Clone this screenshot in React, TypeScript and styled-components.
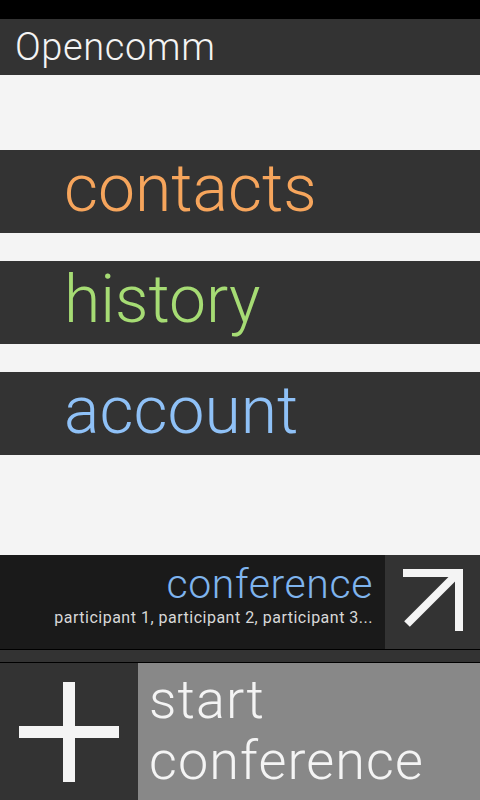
import React from "react";
import styled, { createGlobalStyle } from "styled-components";

const Global = createGlobalStyle`
  html, body { margin: 0; padding: 0; background: #f4f4f4; }
  body { font-family: Roboto, "Liberation Sans", sans-serif; font-weight: 300; }
  * { box-sizing: border-box; }
`;

const Screen = styled.div`
  width: 480px;
  height: 800px;
  display: flex;
  flex-direction: column;
  overflow: hidden;
  background: #f4f4f4;
`;

const StatusBar = styled.div`
  height: 19px;
  background: #000;
  flex: none;
`;

const Header = styled.div`
  height: 56px;
  flex: none;
  background: #333;
  display: flex;
  align-items: center;
  padding-left: 15px;
  color: #f4f4f4;
  font-size: 38px;
  font-weight: 300;
  letter-spacing: 0.6px;
`;

const Main = styled.div`
  flex: 1;
  display: flex;
  flex-direction: column;
  gap: 28px;
  padding-top: 75px;
`;

const MenuItem = styled.div<{ $color: string }>`
  height: 83px;
  background: #333;
  display: flex;
  align-items: center;
  padding-left: 64px;
  padding-bottom: 6px;
  color: ${(p) => p.$color};
  font-size: 66px;
  font-weight: 300;
`;

const ConferenceRow = styled.div`
  height: 95px;
  flex: none;
  display: flex;
  background: #1a1a1a;
  border-bottom: 1px solid #000;
`;

const ConferenceInfo = styled.div`
  flex: 1;
  display: flex;
  flex-direction: column;
  align-items: flex-end;
  padding-right: 12px;
  padding-top: 6px;
`;

const ConferenceTitle = styled.div`
  color: #7fb4ee;
  font-size: 41px;
  line-height: 46px;
  letter-spacing: 0.6px;
`;

const Participants = styled.div`
  color: #d8d8d8;
  font-size: 16px;
  font-weight: 400;
  line-height: 20px;
  margin-top: 1px;
  letter-spacing: 0.5px;
`;

const OpenButton = styled.div`
  width: 95px;
  flex: none;
  background: #333;
  display: flex;
  align-items: center;
  justify-content: center;
`;

const Band = styled.div`
  height: 13px;
  flex: none;
  background: #333;
  border-bottom: 1px solid #000;
`;

const Bottom = styled.div`
  height: 137px;
  flex: none;
  display: flex;
`;

const AddButton = styled.div`
  width: 138px;
  background: #333;
  display: flex;
  align-items: center;
  justify-content: center;
`;

const StartLabel = styled.div`
  flex: 1;
  background: #888;
  color: #f4f4f4;
  font-size: 54px;
  line-height: 61px;
  letter-spacing: 1.1px;
  padding-left: 11px;
  padding-top: 6px;
`;

export default function App() {
  return (
    <>
      <Global />
      <Screen>
        <StatusBar />
        <Header>Opencomm</Header>
        <Main>
          <MenuItem $color="#f6a55c">contacts</MenuItem>
          <MenuItem $color="#a6dc74">history</MenuItem>
          <MenuItem $color="#8fc1f7">account</MenuItem>
        </Main>
        <ConferenceRow>
          <ConferenceInfo>
            <ConferenceTitle>conference</ConferenceTitle>
            <Participants>participant 1, participant 2, participant 3...</Participants>
          </ConferenceInfo>
          <OpenButton>
            <svg width="95" height="95" viewBox="0 0 95 95">
              <path d="M18 14 H78 V76 H70 V22 H18 Z" fill="#f4f4f4" />
              <path d="M22 69 L72 19" stroke="#f4f4f4" strokeWidth="8" fill="none" />
            </svg>
          </OpenButton>
        </ConferenceRow>
        <Band />
        <Bottom>
          <AddButton>
            <svg width="138" height="137" viewBox="0 0 138 137">
              <rect x="63" y="19" width="12" height="100" fill="#f4f4f4" />
              <rect x="19" y="63" width="100" height="12" fill="#f4f4f4" />
            </svg>
          </AddButton>
          <StartLabel>
            start
            <br />
            conference
          </StartLabel>
        </Bottom>
      </Screen>
    </>
  );
}
